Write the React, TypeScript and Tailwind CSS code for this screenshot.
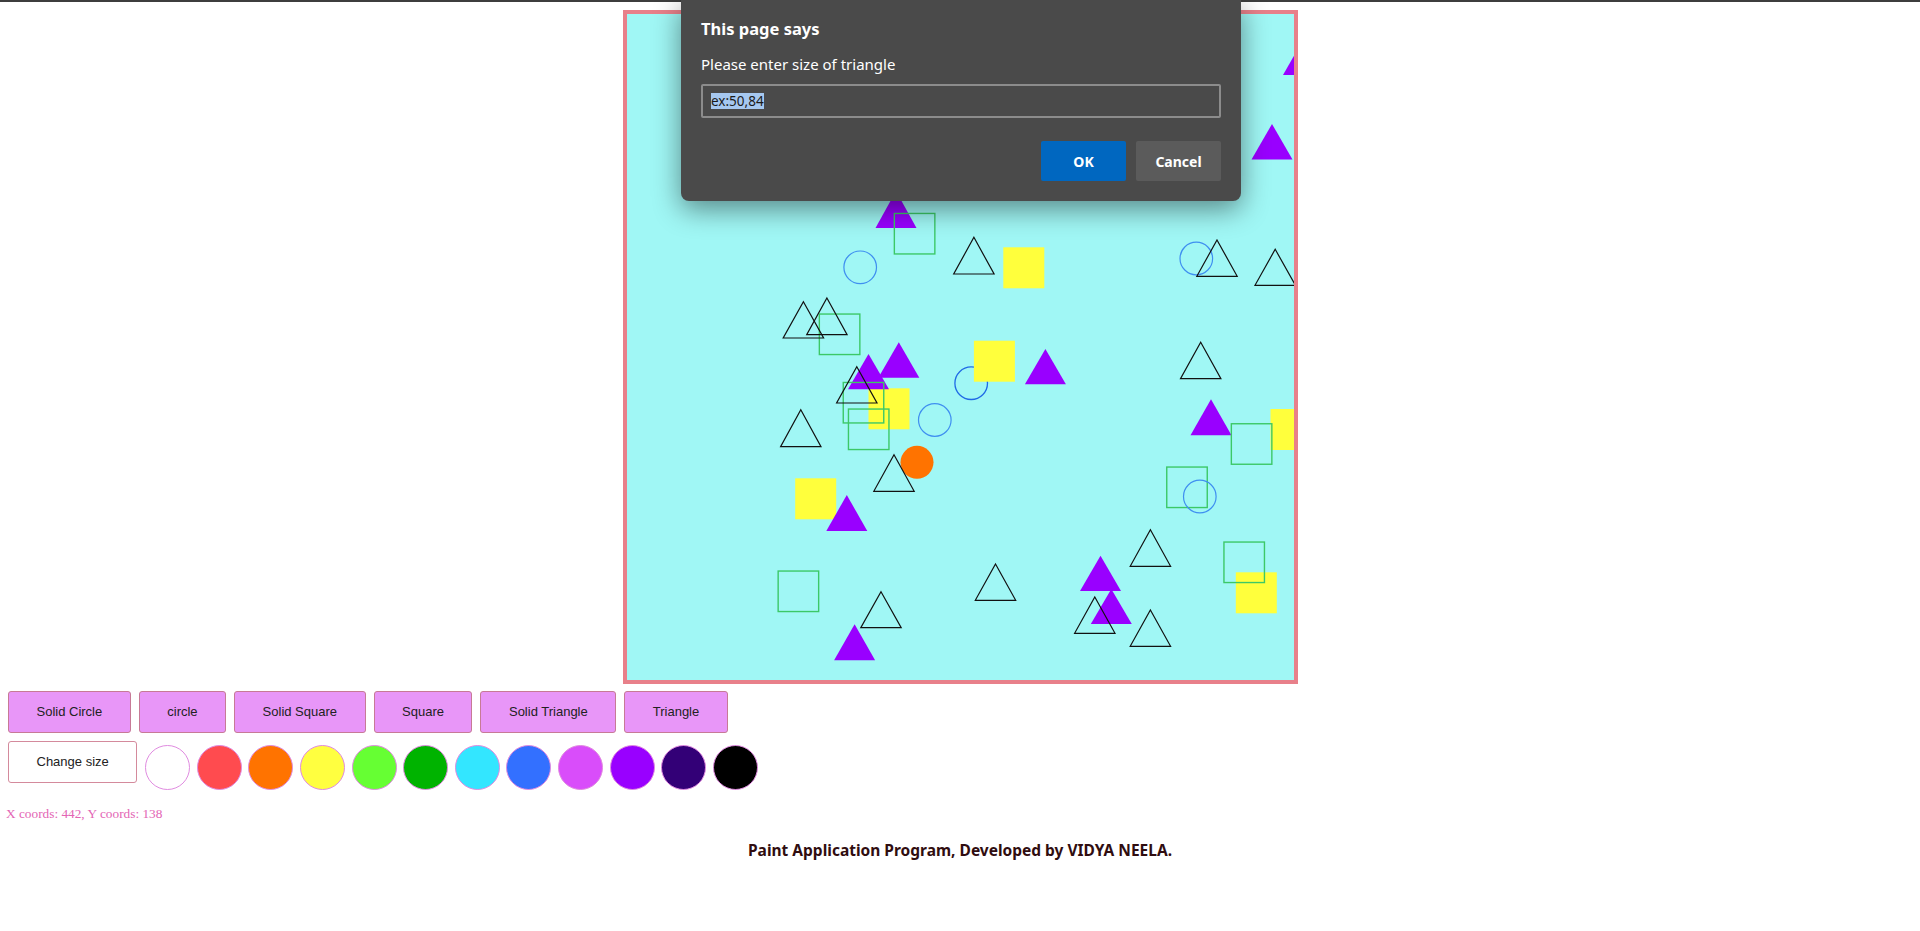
import React from 'react';

type Tri = [number, number, number];
type Pt = [number, number];

// shape positions are page coordinates, the svg viewBox starts at the canvas' inner corner
const solidTriangles: Tri[] = [
  [1303.5, 39, 75],
  [1272, 124, 159.5],
  [896, 191, 228],
  [898.8, 342.3, 377.7],
  [868.5, 354, 389.3],
  [1045.4, 349, 384.3],
  [1211, 399.3, 435.3],
  [846.8, 495, 531],
  [1100.5, 555.7, 591],
  [1111.3, 589, 624],
  [854.6, 624.3, 660.3],
];

const triangles: Tri[] = [
  [973.9, 237.3, 274],
  [1217, 240, 276.3],
  [1275.2, 249.3, 285.3],
  [803.4, 301.7, 338],
  [826.9, 298, 334.7],
  [856.8, 366.7, 403],
  [1200.7, 342.3, 378.7],
  [800.8, 409.7, 446.7],
  [894, 454.7, 491.3],
  [1150.4, 529.7, 566.3],
  [1094.8, 597, 633.3],
  [1150.4, 610, 646.3],
  [995.5, 564, 600.3],
  [881, 591.7, 627.7],
];

const solidSquares: Pt[] = [
  [1003.3, 247.3],
  [868.5, 388.3],
  [973.9, 340.7],
  [1270.5, 409],
  [795.2, 478.3],
  [1235.8, 572.3],
];

const squares: Pt[] = [
  [893.6, 212.7],
  [818.6, 313.3],
  [842.5, 381.7],
  [847.7, 408.3],
  [1230.6, 423],
  [1166, 466.3],
  [1223.2, 541.3],
  [777.4, 570.3],
];

const circles: Pt[] = [
  [860.2, 267.3],
  [1196.3, 258.5],
  [934.8, 420],
  [1199.8, 496.5],
];

const toolButtons = ['Solid Circle', 'circle', 'Solid Square', 'Square', 'Solid Triangle', 'Triangle'];

const colors = [
  'bg-[#ffffff]',
  'bg-[#ff4b4f]',
  'bg-[#ff7300]',
  'bg-[#ffff40]',
  'bg-[#66ff33]',
  'bg-[#00b300]',
  'bg-[#33e6ff]',
  'bg-[#3370ff]',
  'bg-[#d94dfa]',
  'bg-[#9900ff]',
  'bg-[#330077]',
  'bg-[#000000]',
];

function triPath([ax, ay, by]: Tri, half = 20.5) {
  return `M${ax} ${ay} L${ax + half} ${by} L${ax - half} ${by} Z`;
}

function PaintCanvas() {
  return (
    <div className="mx-auto mt-[8px] w-[675px] h-[674px] border-4 border-[#e8808a] bg-[#a0f7f5] overflow-hidden">
      <svg width="667" height="666" viewBox="627 14 667 666" className="block">
        {/* circle that sits under a yellow square */}
        <circle cx={971.2} cy={383.2} r={16.3} fill="none" stroke="#1f6ae6" strokeWidth={1.3} />
        {solidSquares.map(([x, y], i) => (
          <rect key={'ss' + i} x={x} y={y} width={41} height={41} fill="#ffff3c" />
        ))}
        {solidTriangles.map((t, i) => (
          <path key={'st' + i} d={triPath(t)} fill="#9900ff" />
        ))}
        <circle cx={917} cy={462.3} r={16.5} fill="#ff7300" />
        {squares.map(([x, y], i) => (
          <rect key={'sq' + i} x={x + 0.75} y={y + 0.75} width={40.5} height={40.5} fill="none" stroke="#3cc867" strokeWidth={1.4} />
        ))}
        {circles.map(([cx, cy], i) => (
          <circle key={'c' + i} cx={cx} cy={cy} r={16.3} fill="none" stroke="#3f8ff0" strokeWidth={1.2} />
        ))}
        {triangles.map((t, i) => (
          <path key={'t' + i} d={triPath(t, 20.2)} fill="none" stroke="#111" strokeWidth={1.2} />
        ))}
      </svg>
    </div>
  );
}

function PromptDialog() {
  return (
    <div className="absolute left-[681px] top-0 w-[560px] h-[201px] bg-[#4a4a4a] rounded-b-[8px] shadow-[0_8px_28px_rgba(0,0,0,0.45)] px-[20px] pt-[17px] font-['Noto_Sans',sans-serif] text-white">
      <div className="text-[16.5px] leading-[24px] font-bold">This page says</div>
      <div className="mt-[13px] text-[15px] leading-[20px]">Please enter size of triangle</div>
      <div className="mt-[10px] h-[34px] border-2 border-[#8c8c8c] rounded-[2px] flex items-center pl-[8px]">
        <span className="bg-[#a6c8f0] text-[#1a1a1a] text-[13.5px] leading-[16px]">ex:50,84</span>
      </div>
      <div className="mt-[23px] flex justify-end gap-[10px]">
        <button className="w-[85px] h-[40px] bg-[#0067c0] rounded-[2px] text-[14px] font-bold text-white">OK</button>
        <button className="w-[85px] h-[40px] bg-[#5b5b5b] rounded-[2px] text-[14px] font-bold text-white">Cancel</button>
      </div>
    </div>
  );
}

export default function App() {
  return (
    <div className="relative min-h-screen bg-white">
      <div className="h-[2px] bg-[#3d3d3d]" />
      <PaintCanvas />

      <div className="mt-[7px] pl-[8px] flex gap-[8px] font-['Liberation_Sans',Arial,sans-serif] text-[13px] text-[#222]">
        {toolButtons.map((b) => (
          <button key={b} className="h-[42px] px-[27.5px] bg-[#e896f8] border border-[#c77a96] rounded-[3px]">
            {b}
          </button>
        ))}
      </div>

      <div className="mt-[8px] pl-[8px] flex items-start gap-[8px] font-['Liberation_Sans',Arial,sans-serif] text-[13px] text-[#222]">
        <button className="h-[42px] px-[27.5px] bg-white border border-[#d48a9c] rounded-[3px]">Change size</button>
        <div className="mt-[4px] flex gap-[6.6px]">
          {colors.map((c, i) => (
            <span key={i} className={`${c} block w-[45px] h-[44.5px] rounded-full border border-[#e08be0]`} />
          ))}
        </div>
      </div>

      <div className="mt-[14.5px] pl-[6px] font-['Liberation_Serif','Times_New_Roman',serif] text-[13.3px] text-[#e364b4]">
        X coords: 442, Y coords: 138
      </div>

      <div className="mt-[16px] text-center font-['Noto_Sans',sans-serif] font-bold text-[15.5px] leading-[20px] text-[#300d10]">
        Paint Application Program, Developed by VIDYA NEELA.
      </div>

      <PromptDialog />
    </div>
  );
}
